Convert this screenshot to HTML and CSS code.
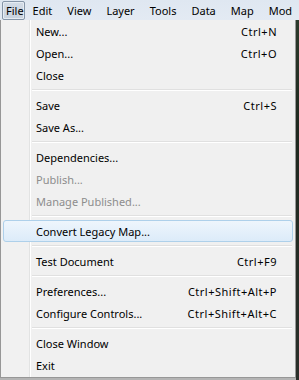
FILE: index.html
```html
<!DOCTYPE html>
<html lang="en">
<head>
    <meta charset="UTF-8">
    <title>File menu</title>
    <link rel="stylesheet" href="styles.css">
</head>
<body>
    <div class="menubar">
        <span class="menu-title active">File</span>
        <span class="menu-title">Edit</span>
        <span class="menu-title">View</span>
        <span class="menu-title">Layer</span>
        <span class="menu-title">Tools</span>
        <span class="menu-title">Data</span>
        <span class="menu-title">Map</span>
        <span class="menu-title">Mod</span>
    </div>

    <div class="main">
        <div class="dropdown">
            <div class="item"><span class="label">New...</span><span class="key">Ctrl+N</span></div>
            <div class="item"><span class="label">Open...</span><span class="key">Ctrl+O</span></div>
            <div class="item"><span class="label">Close</span></div>
            <div class="sep"></div>
            <div class="item"><span class="label">Save</span><span class="key">Ctrl+S</span></div>
            <div class="item"><span class="label">Save As...</span></div>
            <div class="sep"></div>
            <div class="item"><span class="label">Dependencies...</span></div>
            <div class="item disabled"><span class="label">Publish...</span></div>
            <div class="item disabled"><span class="label">Manage Published...</span></div>
            <div class="sep"></div>
            <div class="item hover"><span class="label">Convert Legacy Map...</span></div>
            <div class="sep"></div>
            <div class="item"><span class="label">Test Document</span><span class="key">Ctrl+F9</span></div>
            <div class="sep"></div>
            <div class="item"><span class="label">Preferences...</span><span class="key">Ctrl+Shift+Alt+P</span></div>
            <div class="item"><span class="label">Configure Controls...</span><span class="key">Ctrl+Shift+Alt+C</span></div>
            <div class="sep"></div>
            <div class="item"><span class="label">Close Window</span></div>
            <div class="item"><span class="label">Exit</span></div>
        </div>
        <div class="backdrop"></div>
    </div>
</body>
</html>
```

FILE: styles.css
```css
* {
    margin: 0;
    padding: 0;
    box-sizing: border-box;
    font-family: "Noto Sans", "Open Sans", sans-serif;
}
body {
    width: 299px;
    height: 380px;
    overflow: hidden;
    background-color: #b4b4b4;
    color: #000;
    font-size: 11px;
}
.menubar {
    display: flex;
    align-items: center;
    height: 20px;
    padding-left: 2px;
    background: linear-gradient(#dfe7f1, #e3eaf3);
    white-space: nowrap;
    overflow: hidden;
}
.menu-title {
    height: 19px;
    line-height: 17px;
    padding: 0 6px;
    border: 1px solid transparent;
    margin-right: 1px;
}
.menu-title.active {
    width: 29px;
    padding: 0 0 0 3px;
    border-color: #8595a8;
    border-radius: 2px;
    background: linear-gradient(#d3dce7, #c9d3df);
    box-shadow: inset 0 0 0 1px #e6ecf3;
}
.main {
    display: flex;
    height: 360px;
}
.dropdown {
    width: 296px;
    height: 358px;
    padding: 0 2px 1px;
    border: 1px solid #979797;
    border-top: none;
    background: linear-gradient(to right, #f1f1f1 0 28px, #e2e3e3 28px 29px, #ffffff 29px 30px, #f0f0f0 30px);
}
.backdrop {
    flex: 1;
    background: linear-gradient(#2c3a2b, #1f281f 30%, #2a2f2a);
}
.item {
    display: flex;
    align-items: center;
    height: 22px;
    padding: 0 15px 0 32px;
    border: 1px solid transparent;
    border-radius: 3px;
}
.item .key {
    margin-left: auto;
    letter-spacing: 0.5px;
}
.item.disabled {
    color: #8d8d8d;
}
.item.hover {
    border-color: #aed0ea;
    background: linear-gradient(#eef5fc, #dcebf9);
}
.sep {
    height: 8px;
    margin-left: 29px;
    margin-right: 1px;
    background: linear-gradient(transparent 3px, #e0e0e0 3px 4px, #ffffff 4px 5px, transparent 5px);
}
```
